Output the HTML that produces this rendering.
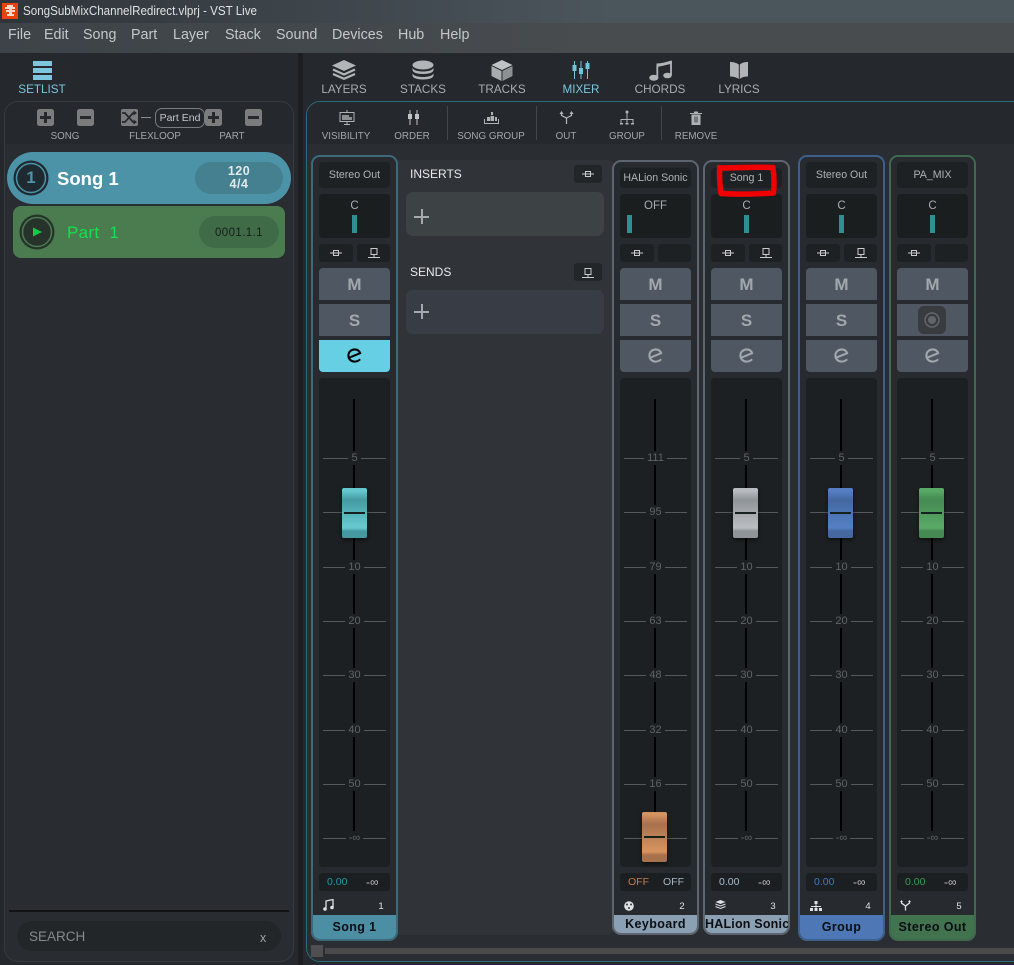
<!DOCTYPE html>
<html><head><meta charset="utf-8"><title>VST Live</title>
<style>
html,body{margin:0;padding:0;background:#25282d}
body{width:1014px;height:965px;position:relative;overflow:hidden;font-family:"Liberation Sans",sans-serif;color:#b4b8bc}
div,span,b,i,svg{position:absolute;display:block;font-style:normal}
.c{text-align:center;white-space:nowrap}
.m{top:27px;font-size:14.3px;color:#c4c8cb;line-height:17px;white-space:nowrap}
.tab{top:83px;width:80px;font-size:11.7px;line-height:14px;color:#a7adb2;text-align:center}
.tb{top:131px;width:90px;font-size:9.8px;line-height:12px;color:#a2a8ad;text-align:center}
.sep{top:106px;width:1px;height:34px;background:#43474c}
.g{top:0;width:87px;height:0}
.f{box-sizing:border-box;left:0;width:87px;border:2px solid;border-radius:9px;background:#272a2f}
.n{left:8px;width:71px;border-radius:4px;background:#1e2124;font-size:10.6px;color:#aeb2b5;text-align:center;white-space:nowrap}
.p{left:8px;top:194px;width:71px;height:44px;border-radius:4px;background:#1a1e1f;font-size:11.5px;line-height:14px;color:#a9adb0;text-align:center}
.p i{left:33px;top:21px;width:5px;height:18px;background:#2f8f92}
.b{top:244px;height:18px;border-radius:3px;background:#1e2124}
.bt{left:8px;width:71px;height:32px;background:#4f5862;color:#a2a7ac;font-weight:bold;font-size:17px;line-height:34px;text-align:center}
.fd{left:8px;top:378px;width:71px;height:489px;border-radius:4px;background:#1c2022}
.tr{left:34px;top:21px;width:2px;height:440px;background:#000}
.t{left:4px;width:63px;height:1px;background:#55595b}
.t span{left:0;width:63px;top:-7px;text-align:center;font-size:11px;line-height:14px;color:#5f6468}
.t span u{text-decoration:none;background:#1c2022;padding:0 3px;display:inline-block}
.h{left:23px;top:110px;width:25px;height:50px;border-radius:2px;box-shadow:0 2px 4px #0008;background:linear-gradient(var(--l) 0,var(--l) 6%,var(--m) 14%,var(--d) 24%,var(--m) 50%,var(--l) 76%,var(--l) 80%,var(--d) 86%,var(--d) 100%)}
.h .l{left:2px;top:24px;width:21px;height:2px;background:#15201f}
.v{left:8px;top:873px;width:71px;height:18px;border-radius:3px;background:#1c1f22;font-size:10.5px;line-height:18px}
.v span{top:0;white-space:nowrap}
.num{top:901px;left:64px;width:12px;text-align:center;font-size:9.5px;line-height:12px;color:#dfe2e4}
.lb{left:2px;width:83px;top:915px;font-weight:bold;font-size:12.5px;letter-spacing:.4px;color:#0b0e12;text-align:center;white-space:nowrap;border-radius:0 0 7px 7px;overflow:hidden}
.sq{width:17px;height:17px}
</style></head>
<body>
<svg width="0" height="0" style="left:0;top:0">
<defs>
<symbol id="ins" viewBox="0 0 12 8"><path d="M0 4h12M3.500 1.500h5v5h-5z" fill="none" stroke="#c9cccf"/></symbol>
<symbol id="snd" viewBox="0 0 12 10"><path d="M3 .5h6v6H3zM6 7v2M0 9.500h12" fill="none" stroke="#c9cccf"/></symbol>
<symbol id="e" viewBox="0 0 16 16"><path d="M2 10.500L14 5.500C13 2.800 11 1.500 8.300 1.500 4.500 1.500 1.500 4.300 1.500 8 1.500 11.800 4.300 14.500 8 14.500c2.500 0 4.500-.8 6-2.500" fill="none" stroke="currentColor" stroke-width="2.200"/></symbol>
<symbol id="plus" viewBox="0 0 17 17"><rect width="17" height="17" rx="2.500" fill="#7c7c7c"/><path d="M3 8.500h11M8.500 3v11" stroke="#26282c" stroke-width="3"/></symbol>
<symbol id="minus" viewBox="0 0 17 17"><rect width="17" height="17" rx="2.500" fill="#7c7c7c"/><path d="M3 8.500h11" stroke="#26282c" stroke-width="3"/></symbol>
</defs>
</svg>

<!-- title & menu -->
<div style="left:0;top:0;width:1014px;height:23px;background:linear-gradient(90deg,#2f3439,#4b555c 60%)"></div>
<div style="left:0;top:23px;width:1014px;height:30px;background:linear-gradient(90deg,#3d4348,#484c4f 60%)"></div>
<div style="left:2px;top:3px;width:16px;height:16px;background:#e8420f"></div>
<svg style="left:4px;top:5px" width="12" height="12"><path d="M3 0h6v2h2v2H8v1h3v2H8v2h2v2H3V9h2V7H2V5h3V4H1V2h2z" fill="#fff" opacity=".8"/></svg>
<div style="left:23px;top:3px;font-size:13px;line-height:16px;color:#dfe2e4;white-space:nowrap;transform:scaleX(.893);transform-origin:0 0">SongSubMixChannelRedirect.vlprj - VST Live</div>
<span class="m" style="left:8px">File</span><span class="m" style="left:44px">Edit</span><span class="m" style="left:83px">Song</span><span class="m" style="left:131px">Part</span><span class="m" style="left:173px">Layer</span><span class="m" style="left:225px">Stack</span><span class="m" style="left:276px">Sound</span><span class="m" style="left:332px">Devices</span><span class="m" style="left:398px">Hub</span><span class="m" style="left:440px">Help</span>

<!-- divider -->
<div style="left:298px;top:53px;width:5px;height:912px;background:#1c1e21"></div>

<!-- setlist -->
<div style="left:33px;top:61px;width:19px;height:5px;background:#7cc6de"></div>
<div style="left:33px;top:68px;width:19px;height:5px;background:#7cc6de"></div>
<div style="left:33px;top:75px;width:19px;height:5px;background:#7cc6de"></div>
<div class="tab" style="left:2px;color:#7cc6de">SETLIST</div>

<!-- left panel -->
<div style="box-sizing:border-box;left:4px;top:101px;width:290px;height:861px;border:1px solid #383b40;border-radius:14px;background:#292c31"></div>
<div style="left:5px;top:102px;width:288px;height:42px;border-radius:13px 13px 0 0;background:#25282d"></div>
<svg class="sq" style="left:37px;top:109px"><use href="#plus"/></svg>
<svg class="sq" style="left:77px;top:109px"><use href="#minus"/></svg>
<svg class="sq" style="left:121px;top:109px" viewBox="0 0 17 17"><rect width="17" height="17" rx="2" fill="#7c7c7c"/><path d="M1 4h3l8 9h3M1 13h3l8-9h3" fill="none" stroke="#26282c" stroke-width="1.700"/><path d="M12.500 1.500l3.500 2.500-3.500 2.500zM12.500 10.500l3.500 2.500-3.500 2.500z" fill="#26282c"/></svg>
<div style="left:141px;top:117px;width:10px;height:1px;background:#8a8d90"></div>
<div class="c" style="box-sizing:border-box;left:155px;top:108px;width:50px;height:20px;border:1px solid #7a7d80;border-radius:7px;font-size:10.500px;line-height:18px;color:#c4c7ca;background:#25282d">Part End</div>
<svg class="sq" style="left:205px;top:109px"><use href="#plus"/></svg>
<svg class="sq" style="left:245px;top:109px"><use href="#minus"/></svg>
<div class="tb" style="left:20px">SONG</div><div class="tb" style="left:110px">FLEXLOOP</div><div class="tb" style="left:187px">PART</div>

<!-- song row -->
<div style="left:7px;top:152px;width:284px;height:52px;border-radius:26px;background:#4c93a8"></div>
<svg style="left:13px;top:160px" width="36" height="36"><circle cx="18" cy="18" r="17.500" fill="#1f2a30"/><circle cx="18" cy="18" r="14.500" fill="none" stroke="#4c93a8" stroke-width="1.500"/></svg>
<div class="c" style="left:13px;top:168px;width:36px;font-weight:bold;font-size:17px;line-height:20px;color:#4c93a8">1</div>
<div style="left:57px;top:168px;font-weight:bold;font-size:18.500px;line-height:21px;color:#fff;white-space:nowrap">Song 1</div>
<div style="left:195px;top:162px;width:88px;height:32px;border-radius:16px;background:#44808f"></div>
<div class="c" style="left:195px;top:165px;width:88px;font-weight:bold;font-size:12.500px;line-height:13px;color:#e3e8ea;letter-spacing:.5px">120<br>4/4</div>

<!-- part row -->
<div style="left:13px;top:206px;width:272px;height:52px;border-radius:8px;background:#4a7c50"></div>
<svg style="left:19px;top:214px" width="36" height="36"><circle cx="18" cy="18" r="17.500" fill="#26322a"/><circle cx="18" cy="18" r="14.500" fill="none" stroke="#4a7c50" stroke-width="1.500"/><path d="M14 13.500l9 4.500-9 4.500z" fill="#17c94a"/></svg>
<div style="left:67px;top:223px;font-size:17px;line-height:20px;color:#14e04e;white-space:pre;letter-spacing:.3px">Part  1</div>
<div style="left:199px;top:216px;width:80px;height:32px;border-radius:16px;background:#406b47"></div>
<div class="c" style="left:199px;top:226px;width:80px;font-size:11.500px;line-height:14px;color:#161d18;letter-spacing:.4px">0001.1.1</div>

<!-- search -->
<div style="left:9px;top:910px;width:280px;height:2px;background:#111315"></div>
<div style="left:17px;top:921px;width:264px;height:30px;border-radius:15px;background:#232629"></div>
<div style="left:29px;top:929px;font-size:13.500px;line-height:16px;color:#85898c">SEARCH</div>
<div style="left:260px;top:931px;font-size:12.500px;line-height:15px;color:#9aa3a8">x</div>

<!-- tabs -->
<svg style="left:331px;top:60px" width="26" height="20" viewBox="0 0 26 20"><path d="M13 0l12 5.500-12 5.500L1 5.500z" fill="#b2b5b8"/><path d="M2 9.500l11 5 11-5M2 14l11 4.800L24 14" fill="none" stroke="#b2b5b8" stroke-width="2.200"/></svg>
<svg style="left:412px;top:60px" width="22" height="20" viewBox="0 0 22 20"><ellipse cx="11" cy="5" rx="10.500" ry="4.500" fill="#b2b5b8"/><path d="M.5 8v2c0 2.500 4.700 4 10.500 4s10.500-1.500 10.500-4V8c-1.500 2.500-5.500 3.500-10.500 3.500S2 10.500.5 8zM.5 13.500v2c0 2.500 4.700 4 10.500 4s10.500-1.500 10.500-4v-2c-1.500 2.500-5.500 3.500-10.500 3.500S2 16 .5 13.500z" fill="#b2b5b8"/></svg>
<svg style="left:491px;top:60px" width="22" height="21" viewBox="0 0 22 21"><path d="M11 0l10.500 5L11 10 .5 5z" fill="#c0c3c6"/><path d="M.5 6l10 5v10l-10-5z" fill="#a9acaf"/><path d="M21.500 6l-10 5v10l10-5z" fill="#8e9194"/></svg>
<svg style="left:571px;top:60px" width="20" height="20" viewBox="0 0 20 20"><path d="M3.500 1v18M10 1v18M16.500 1v18" stroke="#6ec4da" stroke-width="1"/><path d="M1.500 5h4v6h-4zM8 8h4v6H8zM14.500 3h4v6h-4z" fill="#6ec4da"/></svg>
<svg style="left:649px;top:60px" width="24" height="21" viewBox="0 0 24 21"><ellipse cx="4.800" cy="17.800" rx="4.600" ry="3" fill="#b2b5b8"/><ellipse cx="18.500" cy="15.500" rx="4.300" ry="2.800" fill="#b2b5b8"/><path d="M8.300 17V6" fill="none" stroke="#b2b5b8" stroke-width="1.800"/><path d="M22 15V1" fill="none" stroke="#b2b5b8" stroke-width="1.800"/><path d="M7.500 3.500C12 3.500 17 2 22.800.5v3.300C17 5 12 6.500 7.500 7z" fill="#b2b5b8"/></svg>
<svg style="left:730px;top:62px" width="19" height="17" viewBox="0 0 19 17"><path d="M0 0c3 0 6 .5 8.800 2.500V17C6 15 3 14.500 0 14.500zM18 0c-3 0-6 .5-8.200 2.500V17C12 15 15 14.500 18 14.500z" fill="#b2b5b8"/></svg>
<div class="tab" style="left:304px">LAYERS</div><div class="tab" style="left:383px">STACKS</div><div class="tab" style="left:462px">TRACKS</div><div class="tab" style="left:541px;color:#7cc6de">MIXER</div><div class="tab" style="left:620px">CHORDS</div><div class="tab" style="left:699px">LYRICS</div>

<!-- mixer panel -->
<div style="box-sizing:border-box;left:306px;top:101px;width:730px;height:861px;border:1px solid #2a6b7c;border-radius:14px;background:#2a2d32"></div>
<div style="left:307px;top:102px;width:707px;height:42px;border-radius:13px 0 0 0;background:#25282d"></div>
<div class="sep" style="left:447px"></div><div class="sep" style="left:536px"></div><div class="sep" style="left:661px"></div>
<svg style="left:339px;top:110px" width="16" height="15" viewBox="0 0 16 15"><path d="M1 2.500h14v9H1zM8 0v2.500M8 11.500V14M5 14.500h6" fill="none" stroke="#b0b3b6"/><path d="M3 5h7v2h3v3H3z" fill="#8d9093"/></svg>
<svg style="left:407px;top:110px" width="13" height="15" viewBox="0 0 13 15"><path d="M3 0v15M10 0v15" stroke="#c2c5c8"/><path d="M1 4h4v5H1zM8 4h4v5H8z" fill="#c2c5c8"/></svg>
<svg style="left:484px;top:110px" width="15" height="15" viewBox="0 0 15 15"><path d="M.5 9v4.500h14V9" fill="none" stroke="#b0b3b6"/><path d="M3 7h3v4H3zM7 2h2v3H7zM6.500 6H10v5H6.500zM11 7h2v4h-2z" fill="#b0b3b6"/></svg>
<svg style="left:559px;top:110px" width="15" height="15" viewBox="0 0 15 15"><path d="M7.500 14V8M2.500 3v2.500l5 2.500 5-2.500V3" fill="none" stroke="#b8bbbe" stroke-width="1.200"/><path d="M.5 4l2-3 2 3zM10.500 4l2-3 2 3z" fill="#b8bbbe"/></svg>
<svg style="left:620px;top:110px" width="14" height="15" viewBox="0 0 14 15"><circle cx="7" cy="2" r="1.500" fill="#b0b3b6"/><path d="M7 3v6M1 14v-4.500h12V14M7 9.500V14" fill="none" stroke="#b0b3b6"/><path d="M0 13h3v1.500H0zM5.500 13h3v1.500h-3zM11 13h3v1.500h-3z" fill="#b0b3b6"/></svg>
<svg style="left:690px;top:111px" width="12" height="14" viewBox="0 0 12 14"><path d="M0 2h12v1H0zM4 .5h4V2H4zM1.500 3.500h9V14h-9z" fill="#b0b3b6"/><path d="M4.500 5.500h1v6h-1zM6.500 5.500h1v6h-1z" fill="#3a3d40"/></svg>
<div class="tb" style="left:301px">VISIBILITY</div><div class="tb" style="left:367px">ORDER</div><div class="tb" style="left:446px">SONG GROUP</div><div class="tb" style="left:521px">OUT</div><div class="tb" style="left:582px">GROUP</div><div class="tb" style="left:651px">REMOVE</div>

<!-- inserts/sends -->
<div style="left:397px;top:160px;width:218px;height:775px;border-radius:0 8px 8px 0;background:#303438"></div>
<div style="left:410px;top:167px;font-size:12px;line-height:14px;color:#e8eaec">INSERTS</div>
<div style="left:574px;top:165px;width:28px;height:18px;border-radius:3px;background:#232629"></div>
<svg style="left:582px;top:170px" width="12" height="8"><use href="#ins"/></svg>
<div style="left:406px;top:192px;width:198px;height:44px;border-radius:7px;background:#3d4244"></div>
<div style="left:414px;top:216px;width:15px;height:2px;background:#a6a9ab"></div><div style="left:421px;top:209px;width:2px;height:15px;background:#a6a9ab"></div>
<div style="left:410px;top:265px;font-size:12px;line-height:14px;color:#e8eaec">SENDS</div>
<div style="left:574px;top:263px;width:28px;height:18px;border-radius:3px;background:#232629"></div>
<svg style="left:582px;top:268px" width="12" height="10"><use href="#snd"/></svg>
<div style="left:406px;top:290px;width:198px;height:44px;border-radius:7px;background:#383d45"></div>
<div style="left:414px;top:311px;width:15px;height:2px;background:#a6a9ab"></div><div style="left:421px;top:304px;width:2px;height:15px;background:#a6a9ab"></div>

<!-- strip 1 -->
<div class="g" style="left:311px">
<div class="f" style="top:155px;height:786px;border-color:#3d6a7b"></div>
<div class="lb" style="top:915px;height:24px;line-height:25px;background:#4c8ea3">Song 1</div>
<div class="n" style="top:162px;height:26px;line-height:27px">Stereo Out</div>
<div class="p"><span style="left:0;width:71px;top:5px">C</span><i></i></div>
<div class="b" style="left:8px;width:34px"></div><div class="b" style="left:46px;width:33px"></div>
<svg style="left:19px;top:249px" width="12" height="8"><use href="#ins"/></svg><svg style="left:57px;top:248px" width="12" height="10"><use href="#snd"/></svg>
<div class="bt" style="top:268px;border-radius:4px 4px 0 0">M</div><div class="bt" style="top:304px">S</div>
<div class="bt" style="top:340px;background:#66cfe4;color:#000;border-radius:0 0 4px 4px"><svg style="left:28px;top:8px" width="15" height="15"><use href="#e"/></svg></div>
<div class="fd"><div class="tr"></div>
<div class="t" style="top:80px"><span><u>5</u></span></div><div class="t" style="top:134px"></div><div class="t" style="top:189px"><span><u>10</u></span></div><div class="t" style="top:243px"><span><u>20</u></span></div><div class="t" style="top:297px"><span><u>30</u></span></div><div class="t" style="top:352px"><span><u>40</u></span></div><div class="t" style="top:406px"><span><u>50</u></span></div><div class="t" style="top:460px"><span><u>-∞</u></span></div>
<div class="h" style="--l:#66c8cf;--m:#55b3ba;--d:#459aa1"><i class="l"></i></div></div>
<div class="v"><span style="left:8px;color:#1f9aa3">0.00</span><span style="left:47px;color:#bbb;font-size:12px">-∞</span></div>
<svg style="left:12px;top:899px" width="11" height="12" viewBox="0 0 11 12"><path d="M3 9.500V2l7-1.500V8" fill="none" stroke="#dfe2e4" stroke-width="1.300"/><circle cx="2" cy="10" r="1.800" fill="#dfe2e4"/><circle cx="9" cy="8.500" r="1.800" fill="#dfe2e4"/></svg>
<div class="num">1</div>
</div>

<!-- strip 2 -->
<div class="g" style="left:612px">
<div class="f" style="top:160px;height:775px;border-color:#5d6670"></div>
<div class="lb" style="top:915px;height:18px;line-height:19px;background:#8ba0b2">Keyboard</div>
<div class="n" style="top:168px;height:20px;line-height:21px">HALion Sonic</div>
<div class="p"><span style="left:0;width:71px;top:5px">OFF</span><i style="left:7px"></i></div>
<div class="b" style="left:8px;width:34px"></div><div class="b" style="left:46px;width:33px"></div>
<svg style="left:19px;top:249px" width="12" height="8"><use href="#ins"/></svg>
<div class="bt" style="top:268px;border-radius:4px 4px 0 0">M</div><div class="bt" style="top:304px">S</div>
<div class="bt" style="top:340px;border-radius:0 0 4px 4px"><svg style="left:28px;top:8px" width="15" height="15"><use href="#e"/></svg></div>
<div class="fd"><div class="tr"></div>
<div class="t" style="top:80px"><span><u>111</u></span></div><div class="t" style="top:134px"><span><u>95</u></span></div><div class="t" style="top:189px"><span><u>79</u></span></div><div class="t" style="top:243px"><span><u>63</u></span></div><div class="t" style="top:297px"><span><u>48</u></span></div><div class="t" style="top:352px"><span><u>32</u></span></div><div class="t" style="top:406px"><span><u>16</u></span></div><div class="t" style="top:460px"></div>
<div class="h" style="top:434px;left:22px;--l:#d4935f;--m:#bd8257;--d:#a8714e"><i class="l"></i></div></div>
<div class="v"><span style="left:8px;color:#c87a4a">OFF</span><span style="left:43px;color:#a5b8c8">OFF</span></div>
<svg style="left:12px;top:901px" width="10" height="10"><circle cx="5" cy="5" r="4.800" fill="#dfe2e4"/><circle cx="3" cy="3.500" r="1" fill="#33363a"/><circle cx="7" cy="3.500" r="1" fill="#33363a"/><circle cx="5" cy="7" r="1" fill="#33363a"/></svg>
<div class="num">2</div>
</div>

<!-- strip 3 -->
<div class="g" style="left:703px">
<div class="f" style="top:160px;height:775px;border-color:#5d6670"></div>
<div class="lb" style="top:915px;height:18px;line-height:19px;background:#8ba0b2;letter-spacing:.2px">HALion Sonic</div>
<div class="n" style="top:168px;height:20px;line-height:21px">Song 1</div>
<div class="p"><span style="left:0;width:71px;top:5px">C</span><i></i></div>
<div class="b" style="left:8px;width:34px"></div><div class="b" style="left:46px;width:33px"></div>
<svg style="left:19px;top:249px" width="12" height="8"><use href="#ins"/></svg><svg style="left:57px;top:248px" width="12" height="10"><use href="#snd"/></svg>
<div class="bt" style="top:268px;border-radius:4px 4px 0 0">M</div><div class="bt" style="top:304px">S</div>
<div class="bt" style="top:340px;border-radius:0 0 4px 4px"><svg style="left:28px;top:8px" width="15" height="15"><use href="#e"/></svg></div>
<div class="fd"><div class="tr"></div>
<div class="t" style="top:80px"><span><u>5</u></span></div><div class="t" style="top:134px"></div><div class="t" style="top:189px"><span><u>10</u></span></div><div class="t" style="top:243px"><span><u>20</u></span></div><div class="t" style="top:297px"><span><u>30</u></span></div><div class="t" style="top:352px"><span><u>40</u></span></div><div class="t" style="top:406px"><span><u>50</u></span></div><div class="t" style="top:460px"><span><u>-∞</u></span></div>
<div class="h" style="left:22px;--l:#b8bcc0;--m:#a5a9ad;--d:#8f9498"><i class="l"></i></div></div>
<div class="v"><span style="left:8px;color:#a8bccc">0.00</span><span style="left:47px;color:#bbb;font-size:12px">-∞</span></div>
<svg style="left:12px;top:900px" width="11" height="10" viewBox="0 0 11 10"><path d="M5.500 0l5 2-5 2-5-2z" fill="#dfe2e4"/><path d="M.5 4l5 2 5-2M.5 6.500l5 2 5-2" fill="none" stroke="#dfe2e4"/></svg>
<div class="num">3</div>
</div>

<!-- strip 4 -->
<div class="g" style="left:798px">
<div class="f" style="top:155px;height:786px;border-color:#3d5f8c"></div>
<div class="lb" style="top:915px;height:24px;line-height:25px;background:#4d78b5">Group</div>
<div class="n" style="top:162px;height:26px;line-height:27px">Stereo Out</div>
<div class="p"><span style="left:0;width:71px;top:5px">C</span><i></i></div>
<div class="b" style="left:8px;width:34px"></div><div class="b" style="left:46px;width:33px"></div>
<svg style="left:19px;top:249px" width="12" height="8"><use href="#ins"/></svg><svg style="left:57px;top:248px" width="12" height="10"><use href="#snd"/></svg>
<div class="bt" style="top:268px;border-radius:4px 4px 0 0">M</div><div class="bt" style="top:304px">S</div>
<div class="bt" style="top:340px;border-radius:0 0 4px 4px"><svg style="left:28px;top:8px" width="15" height="15"><use href="#e"/></svg></div>
<div class="fd"><div class="tr"></div>
<div class="t" style="top:80px"><span><u>5</u></span></div><div class="t" style="top:134px"></div><div class="t" style="top:189px"><span><u>10</u></span></div><div class="t" style="top:243px"><span><u>20</u></span></div><div class="t" style="top:297px"><span><u>30</u></span></div><div class="t" style="top:352px"><span><u>40</u></span></div><div class="t" style="top:406px"><span><u>50</u></span></div><div class="t" style="top:460px"><span><u>-∞</u></span></div>
<div class="h" style="left:22px;--l:#557fc2;--m:#4a74b4;--d:#44689f"><i class="l"></i></div></div>
<div class="v"><span style="left:8px;color:#3f78c5">0.00</span><span style="left:47px;color:#bbb;font-size:12px">-∞</span></div>
<svg style="left:12px;top:901px" width="12" height="10" viewBox="0 0 12 10"><path d="M4.500 0h3v3h-3zM0 7h3v3H0zM4.500 7h3v3h-3zM9 7h3v3H9zM1 5h10v1H1zM5.500 3h1v4h-1z" fill="#dfe2e4"/></svg>
<div class="num">4</div>
</div>

<!-- strip 5 -->
<div class="g" style="left:889px">
<div class="f" style="top:155px;height:786px;border-color:#3f6a50"></div>
<div class="lb" style="top:915px;height:24px;line-height:25px;background:#41734f">Stereo Out</div>
<div class="n" style="top:162px;height:26px;line-height:27px">PA_MIX</div>
<div class="p"><span style="left:0;width:71px;top:5px">C</span><i></i></div>
<div class="b" style="left:8px;width:34px"></div><div class="b" style="left:46px;width:33px"></div>
<svg style="left:19px;top:249px" width="12" height="8"><use href="#ins"/></svg>
<div class="bt" style="top:268px;border-radius:4px 4px 0 0">M</div><div class="bt" style="top:304px"></div>
<div style="left:29px;top:306px;width:28px;height:28px;border-radius:6px;background:#383c40"></div>
<svg style="left:35px;top:312px" width="16" height="16"><circle cx="8" cy="8" r="7" fill="none" stroke="#62666a" stroke-width="1.500"/><circle cx="8" cy="8" r="4" fill="#62666a"/></svg>
<div class="bt" style="top:340px;border-radius:0 0 4px 4px"><svg style="left:28px;top:8px" width="15" height="15"><use href="#e"/></svg></div>
<div class="fd"><div class="tr"></div>
<div class="t" style="top:80px"><span><u>5</u></span></div><div class="t" style="top:134px"></div><div class="t" style="top:189px"><span><u>10</u></span></div><div class="t" style="top:243px"><span><u>20</u></span></div><div class="t" style="top:297px"><span><u>30</u></span></div><div class="t" style="top:352px"><span><u>40</u></span></div><div class="t" style="top:406px"><span><u>50</u></span></div><div class="t" style="top:460px"><span><u>-∞</u></span></div>
<div class="h" style="left:22px;--l:#58a966;--m:#4e9a5c;--d:#468a53"><i class="l"></i></div></div>
<div class="v"><span style="left:8px;color:#3a9a55">0.00</span><span style="left:47px;color:#bbb;font-size:12px">-∞</span></div>
<svg style="left:11px;top:900px" width="11" height="11" viewBox="0 0 11 11"><path d="M5.500 10.500V6M1.500 1.500V3l4 3 4-3V1.500" fill="none" stroke="#dfe2e4" stroke-width="1.300"/><path d="M0 2l1.500-2L3 2zM8 2l1.500-2L11 2z" fill="#dfe2e4"/></svg>
<div class="num">5</div>
</div>

<!-- red annotation -->
<svg style="left:712px;top:162px" width="70" height="38" viewBox="0 0 70 38"><path d="M8 3C7 12 8 24 9 31.500C26 32.500 46 32 61.500 31C62.500 22 62 13 61 5.500C44 4.500 25 6 8 6" fill="none" stroke="#f00000" stroke-width="5.500" stroke-linejoin="round"/></svg>

<!-- scrollbar -->
<div style="left:311px;top:945px;width:12px;height:12px;background:#4f4f4f"></div>
<div style="left:325px;top:948px;width:689px;height:6px;background:#4a4a4a"></div>
</body></html>
